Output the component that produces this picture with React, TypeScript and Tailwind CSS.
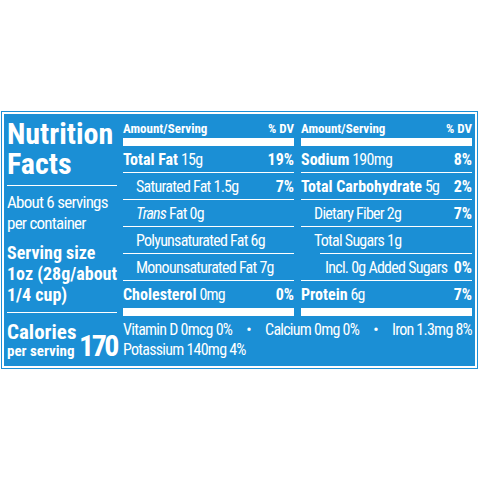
import type { ReactNode } from 'react'

type Row = {
  label: ReactNode
  dv?: string
  indent?: string
  line?: string
}

const mid: Row[] = [
  { label: <><b>Total Fat</b> 15g</>, dv: '19%', line: 'ml-0' },
  { label: 'Saturated Fat 1.5g', dv: '7%', indent: 'pl-[13px]', line: 'ml-0' },
  { label: <><i>Trans</i> Fat 0g</>, indent: 'pl-[13px]', line: 'ml-0' },
  { label: 'Polyunsaturated Fat 6g', indent: 'pl-[13px]', line: 'ml-0' },
  { label: 'Monounsaturated Fat 7g', indent: 'pl-[13px]', line: 'ml-0' },
  { label: <><b>Cholesterol</b> 0mg</>, dv: '0%' },
]

const side: Row[] = [
  { label: <><b>Sodium</b> 190mg</>, dv: '8%', line: 'ml-0' },
  { label: <><b>Total Carbohydrate</b> 5g</>, dv: '2%', line: 'ml-0' },
  { label: 'Dietary Fiber 2g', dv: '7%', indent: 'pl-[13px]', line: 'ml-0' },
  { label: 'Total Sugars 1g', indent: 'pl-[13px]', line: 'ml-[19px]' },
  { label: 'Incl. 0g Added Sugars', dv: '0%', indent: 'pl-[24px]', line: 'ml-0' },
  { label: <><b>Protein</b> 6g</>, dv: '7%' },
]

function Column({ rows }: { rows: Row[] }) {
  return (
    <div className="flex flex-col">
      <div className="flex justify-between pt-[8px] text-[13px] font-bold leading-[13px] font-stretch-[84%]">
        <span>Amount/Serving</span>
        <span>% DV</span>
      </div>
      <div className="mt-[3px] h-[8px] bg-white" />
      {rows.map((r, i) => (
        <div key={i} className="flex h-[27px] flex-col">
          <div className={`flex flex-1 items-center justify-between whitespace-nowrap text-[16px] leading-[17px] ${r.indent ?? ''}`}>
            <span className="tracking-[-0.75px] font-stretch-condensed [&_b]:tracking-normal [&_b]:font-stretch-[84%]">
              {r.label}
            </span>
            {r.dv && <span className="font-bold font-stretch-[84%]">{r.dv}</span>}
          </div>
          {r.line && <div className={`h-px bg-white ${r.line}`} />}
        </div>
      ))}
      <div className="h-[8px] bg-white" />
    </div>
  )
}

export default function App() {
  return (
    <div className="h-[480px] w-[480px] bg-white pt-[111px] pl-[1px] font-['Roboto',sans-serif] text-white">
      <div className="h-[258px] w-[477px] border border-[#1b8fd5] bg-white p-[2px]">
        <div className="flex h-full bg-[#1b8fd5] px-[3px]">
          <div className="flex w-[110px] flex-col whitespace-nowrap">
            <div className="pt-[5px] text-[30px] font-bold leading-[30px] font-stretch-[84%]">
              Nutrition<br />Facts
            </div>
            <div className="mt-[6px] h-px bg-white" />
            <div className="mt-[6px] text-[17px] leading-[21px] tracking-[-0.75px] font-stretch-condensed">
              About 6 servings<br />per container
            </div>
            <div className="mt-[8px] text-[18px] font-bold leading-[21px] font-stretch-[84%]">
              Serving size<br />1oz (28g/about<br />1/4 cup)
            </div>
            <div className="mt-[7px] h-px bg-white" />
            <div className="mt-[9px] flex items-end justify-between font-bold font-stretch-[84%]">
              <div className="flex flex-col">
                <span className="text-[21px] leading-[21px]">Calories</span>
                <span className="text-[15px] leading-[16px]">per serving</span>
              </div>
              <span className="text-[30px] leading-[26px] tracking-[-2.5px] font-stretch-condensed">170</span>
            </div>
          </div>
          <div className="ml-[6px] flex flex-1 flex-col">
            <div className="grid grid-cols-2 gap-x-[7px]">
              <Column rows={mid} />
              <Column rows={side} />
            </div>
            <div className="mt-[4px] flex justify-between whitespace-nowrap text-[16px] leading-[20px] tracking-[-0.75px] font-stretch-condensed">
              <span>Vitamin D 0mcg 0%</span>
              <span>•</span>
              <span>Calcium 0mg 0%</span>
              <span>•</span>
              <span>Iron 1.3mg 8%</span>
            </div>
            <div className="text-[16px] leading-[20px] tracking-[-0.75px] font-stretch-condensed">
              Potassium 140mg 4%
            </div>
          </div>
        </div>
      </div>
    </div>
  )
}
